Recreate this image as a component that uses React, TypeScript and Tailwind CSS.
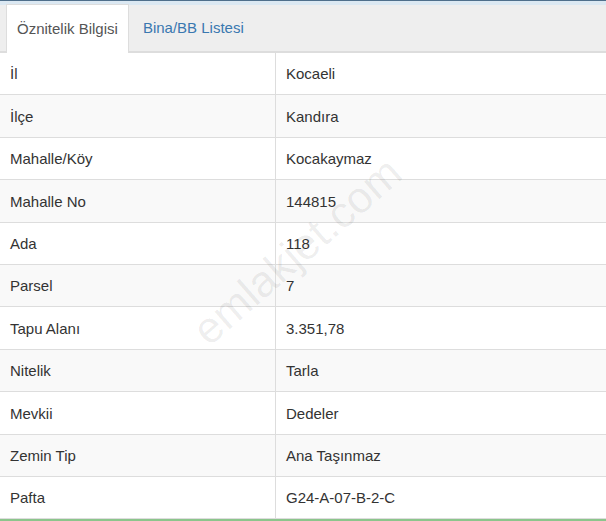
import React from 'react'

const rows: [string, string][] = [
  ['İl', 'Kocaeli'],
  ['İlçe', 'Kandıra'],
  ['Mahalle/Köy', 'Kocakaymaz'],
  ['Mahalle No', '144815'],
  ['Ada', '118'],
  ['Parsel', '7'],
  ['Tapu Alanı', '3.351,78'],
  ['Nitelik', 'Tarla'],
  ['Mevkii', 'Dedeler'],
  ['Zemin Tip', 'Ana Taşınmaz'],
  ['Pafta', 'G24-A-07-B-2-C'],
]

export default function App() {
  return (
    <div
      className="relative w-[606px] h-[521px] overflow-hidden bg-white text-[15px] text-[#333]"
      style={{ fontFamily: '"Liberation Sans", Arial, sans-serif' }}
    >
      {/* üst şerit */}
      <div className="h-px bg-[#4f6f8b]" />
      <div className="h-[4px] bg-[#dbe8f2]" />

      {/* sekmeler */}
      <div className="flex h-[48px] pl-[6px] bg-[#eeeeee] border-b-2 border-[#dddddd]">
        <div className="-mt-px -mb-[2px] flex items-center px-[10px] bg-white border border-b-0 border-[#dddddd] text-[#555]">
          Öznitelik Bilgisi
        </div>
        <div className="flex items-center pl-[14px] text-[#3a78b0]">Bina/BB Listesi</div>
      </div>

      {/* tablo */}
      <div className="flex flex-col">
        {rows.map(([k, v], i) => (
          <div
            key={k}
            className={
              'grid grid-cols-[276px_1fr] h-[42.4px] border-b border-[#dddddd] ' +
              (i % 2 === 1 ? 'bg-[#f9f9f9]' : 'bg-white')
            }
          >
            <div className="flex items-center pl-[10px] pt-[2px] border-r border-[#dddddd]">{k}</div>
            <div className="flex items-center pl-[10px] pt-[2px]">{v}</div>
          </div>
        ))}
      </div>
      <div className="h-[2px] bg-[#8cc58c]" />

      {/* filigran */}
      <div className="pointer-events-none absolute left-[297px] top-[251px] -translate-x-1/2 -translate-y-1/2 -rotate-[41deg] whitespace-nowrap text-[44px] text-black/[0.07]">
        emlakjet.com
      </div>
    </div>
  )
}
